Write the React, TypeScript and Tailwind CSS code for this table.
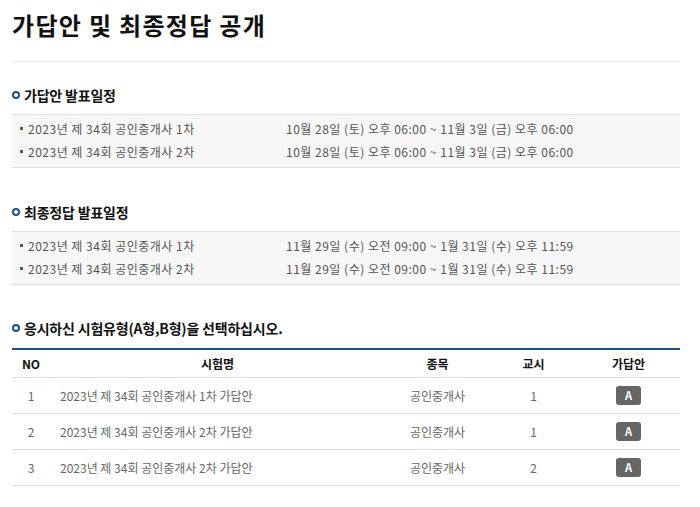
import { ReactNode } from 'react';

const FONT = { fontFamily: '"Noto Sans CJK KR", "Noto Sans", sans-serif' };

const firstSchedule = [
  { name: '2023년 제 34회 공인중개사 1차', date: '10월 28일 (토) 오후 06:00 ~ 11월 3일 (금) 오후 06:00' },
  { name: '2023년 제 34회 공인중개사 2차', date: '10월 28일 (토) 오후 06:00 ~ 11월 3일 (금) 오후 06:00' }
];

const finalSchedule = [
  { name: '2023년 제 34회 공인중개사 1차', date: '11월 29일 (수) 오전 09:00 ~ 1월 31일 (수) 오후 11:59' },
  { name: '2023년 제 34회 공인중개사 2차', date: '11월 29일 (수) 오전 09:00 ~ 1월 31일 (수) 오후 11:59' }
];

const exams = [
  { no: 1, title: '2023년 제 34회 공인중개사 1차 가답안', subject: '공인중개사', period: 1 },
  { no: 2, title: '2023년 제 34회 공인중개사 2차 가답안', subject: '공인중개사', period: 1 },
  { no: 3, title: '2023년 제 34회 공인중개사 2차 가답안', subject: '공인중개사', period: 2 }
];

function SectionTitle({ children, className }: { children: ReactNode; className?: string }) {
  return (
    <div className={`flex h-[20px] items-center gap-[4px] ${className ?? ''}`}>
      <span className="h-[8px] w-[8px] rounded-full border-2 border-[#1d4f84]" />
      <h2 className="text-[14px] leading-[20px] font-bold tracking-[-0.2px] text-[#111]">{children}</h2>
    </div>
  );
}

function ScheduleBox({ rows }: { rows: { name: string; date: string }[] }) {
  return (
    <div className="border-y border-[#dddddd] bg-[#f7f7f7] pt-[2px] pb-[4px]">
      {rows.map((row, i) => (
        <div
          key={i}
          className="grid h-[23px] grid-cols-[274px_1fr] items-center text-[12px] tracking-[0.5px] text-[#555]"
        >
          <div className="flex items-center pl-[8px]">
            <span className="h-[3px] w-[3px] bg-[#555]" />
            <span className="ml-[5px]">{row.name}</span>
          </div>
          <div>{row.date}</div>
        </div>
      ))}
    </div>
  );
}

const cols = 'grid grid-cols-[38px_335px_105px_87px_1fr] items-center';

export default function App() {
  return (
    <div className="min-h-screen bg-white px-[12px] pb-8" style={FONT}>
      <div className="w-[668px]">
        <header className="h-[62px] border-b border-[#ececec] pt-[10px]">
          <h1 className="text-[24px] leading-[30px] font-bold tracking-[1.3px] text-[#111]">가답안 및 최종정답 공개</h1>
        </header>

        <SectionTitle className="mt-[23px] mb-[9px]">가답안 발표일정</SectionTitle>
        <ScheduleBox rows={firstSchedule} />

        <SectionTitle className="mt-[34px] mb-[9px]">최종정답 발표일정</SectionTitle>
        <ScheduleBox rows={finalSchedule} />

        <SectionTitle className="mt-[33px] mb-[10px]">응시하신 시험유형(A형,B형)을 선택하십시오.</SectionTitle>
        <div className="border-t-2 border-[#1d4f84]">
          <div className={`${cols} h-[28px] border-b border-[#dddddd] text-[12px] font-bold text-[#111]`}>
            <div className="text-center">NO</div>
            <div className="text-center">시험명</div>
            <div className="text-center">종목</div>
            <div className="text-center">교시</div>
            <div className="text-center">가답안</div>
          </div>
          {exams.map((exam) => (
            <div key={exam.no} className={`${cols} h-[36px] border-b border-[#dddddd] text-[12px] text-[#666]`}>
              <div className="text-center">{exam.no}</div>
              <div className="pl-[10px]">{exam.title}</div>
              <div className="text-center">{exam.subject}</div>
              <div className="text-center">{exam.period}</div>
              <div className="flex justify-center">
                <button className="flex h-[19px] w-[25px] items-center justify-center rounded-[3px] bg-[#666] text-[11px] font-bold text-white">
                  A
                </button>
              </div>
            </div>
          ))}
        </div>
      </div>
    </div>
  );
}
